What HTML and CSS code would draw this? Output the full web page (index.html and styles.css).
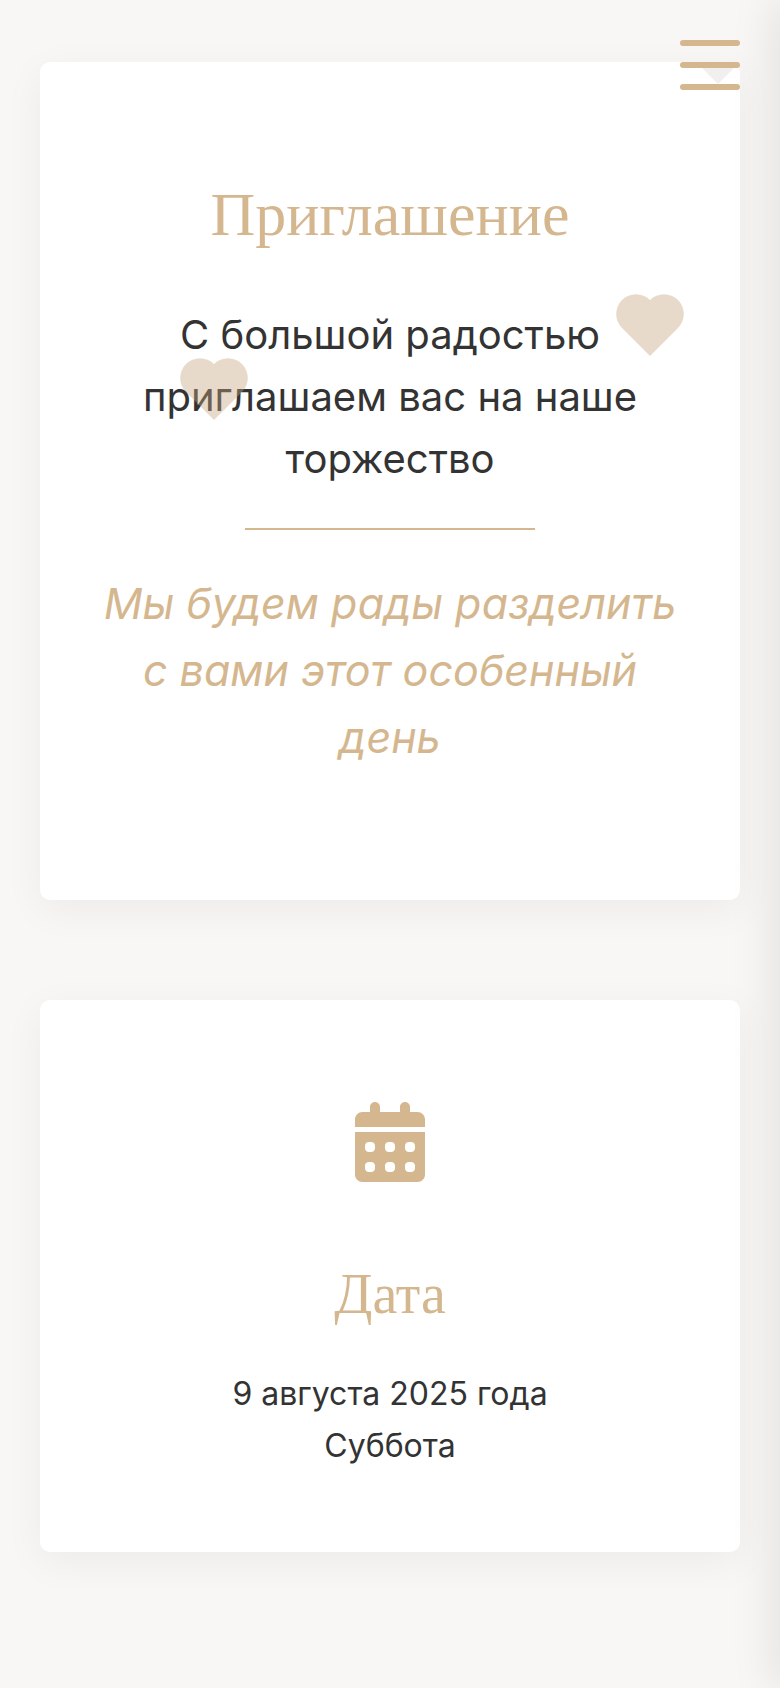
FILE: index.html
```html
<!DOCTYPE html>
<html lang="ru">
<head>
<meta charset="utf-8">
<meta name="viewport" content="width=device-width, initial-scale=1">
<title>Приглашение</title>
<link rel="stylesheet" href="styles.css">
</head>
<body>
<button class="menu" type="button" aria-label="Меню">
  <span class="menu-bar"></span>
  <span class="menu-bar"></span>
  <span class="menu-bar"></span>
</button>
<main class="page">
  <section class="card invite">
    <svg class="heart heart-faint" viewBox="0 0 68 62" aria-hidden="true"><path d="M16 44 34 62 52 44Z"/></svg>
    <svg class="heart heart-left" viewBox="0 0 68 62" aria-hidden="true"><path d="M34 62 6 34A19 19 0 0 1 34 6A19 19 0 0 1 62 34Z"/></svg>
    <svg class="heart heart-right" viewBox="0 0 68 62" aria-hidden="true"><path d="M34 62 6 34A19 19 0 0 1 34 6A19 19 0 0 1 62 34Z"/></svg>
    <h1 class="title">Приглашение</h1>
    <p class="lead">С большой радостью<br>приглашаем вас на наше<br>торжество</p>
    <hr class="divider">
    <p class="wish">Мы будем рады разделить<br>с вами этот особенный<br>день</p>
  </section>
  <section class="card date">
    <svg class="calendar" viewBox="0 0 448 512" aria-hidden="true"><path d="M0 464c0 26.500 21.500 48 48 48h352c26.500 0 48-21.500 48-48V192H0v272zm320-184c0-13 11-24 24-24h16c13 0 24 11 24 24v16c0 13-11 24-24 24h-16c-13 0-24-11-24-24v-16zm0 128c0-13 11-24 24-24h16c13 0 24 11 24 24v16c0 13-11 24-24 24h-16c-13 0-24-11-24-24v-16zM192 280c0-13 11-24 24-24h16c13 0 24 11 24 24v16c0 13-11 24-24 24h-16c-13 0-24-11-24-24v-16zm0 128c0-13 11-24 24-24h16c13 0 24 11 24 24v16c0 13-11 24-24 24h-16c-13 0-24-11-24-24v-16zM64 280c0-13 11-24 24-24h16c13 0 24 11 24 24v16c0 13-11 24-24 24H88c-13 0-24-11-24-24v-16zm0 128c0-13 11-24 24-24h16c13 0 24 11 24 24v16c0 13-11 24-24 24H88c-13 0-24-11-24-24v-16zM400 64h-48V32c0-17.700-14.300-32-32-32s-32 14.300-32 32v32H160V32c0-17.700-14.300-32-32-32S96 14.300 96 32v32H48C21.500 64 0 85.500 0 112v48h448v-48c0-26.500-21.500-48-48-48z"/></svg>
    <h2 class="subtitle">Дата</h2>
    <p class="details">9 августа 2025 года<br>Суббота</p>
  </section>
</main>
<nav class="drawer" aria-label="Разделы"></nav>
</body>
</html>
```

FILE: styles.css
```css
:root {
  --gold: #d5b78f;
  --ink: #333333;
  --paper: #f8f7f5;
}

* {
  box-sizing: border-box;
}

body {
  margin: 0;
  min-height: 100vh;
  overflow-x: hidden;
  background: var(--paper);
  color: var(--ink);
  font-family: Inter, "Open Sans", sans-serif;
  text-align: center;
}

.page {
  display: flex;
  flex-direction: column;
  gap: 100px;
  padding: 62px 40px 136px;
}

.card {
  position: relative;
  padding: 102px 40px 80px;
  border-radius: 10px;
  background: #ffffff;
  box-shadow: 0 10px 40px rgba(0, 0, 0, 0.05);
}

.invite {
  padding-top: 114px;
  padding-bottom: 129px;
}

.title,
.subtitle {
  margin: 0;
  color: var(--gold);
  font-family: "Liberation Serif", serif;
  font-weight: 400;
}

.title {
  font-size: 62px;
  line-height: 76px;
}

.lead {
  margin: 52px 0 0;
  font-size: 40px;
  line-height: 62px;
}

.divider {
  width: 290px;
  height: 2px;
  margin: 38px auto 40px;
  border: 0;
  background: var(--gold);
}

.wish {
  margin: 0;
  color: var(--gold);
  font-size: 43px;
  font-style: italic;
  line-height: 67px;
}

.calendar {
  display: block;
  width: 70px;
  height: 80px;
  margin: 0 auto 78px;
  fill: var(--gold);
}

.subtitle {
  font-size: 56px;
  line-height: 68px;
}

.details {
  margin: 40px 0 0;
  font-size: 32px;
  line-height: 52px;
}

.heart {
  position: absolute;
  width: 68px;
  height: 62px;
  fill: #c5a57d;
  opacity: 0.4;
}

.heart-left {
  top: 296px;
  left: 20%;
}

.heart-right {
  top: 232px;
  right: 8%;
}

.heart-faint {
  top: -40px;
  right: -12px;
  fill: #f1f0ef;
  opacity: 1;
}

.menu {
  position: absolute;
  z-index: 2;
  top: 40px;
  right: 40px;
  display: flex;
  flex-direction: column;
  gap: 16px;
  width: 60px;
  padding: 0;
  border: 0;
  background: none;
}

.menu-bar {
  height: 6px;
  border-radius: 3px;
  background: var(--gold);
}

.drawer {
  position: fixed;
  top: 0;
  left: 100%;
  width: 70%;
  height: 100%;
  background: #ffffff;
  box-shadow: -10px 0 40px rgba(0, 0, 0, 0.08);
}
```
